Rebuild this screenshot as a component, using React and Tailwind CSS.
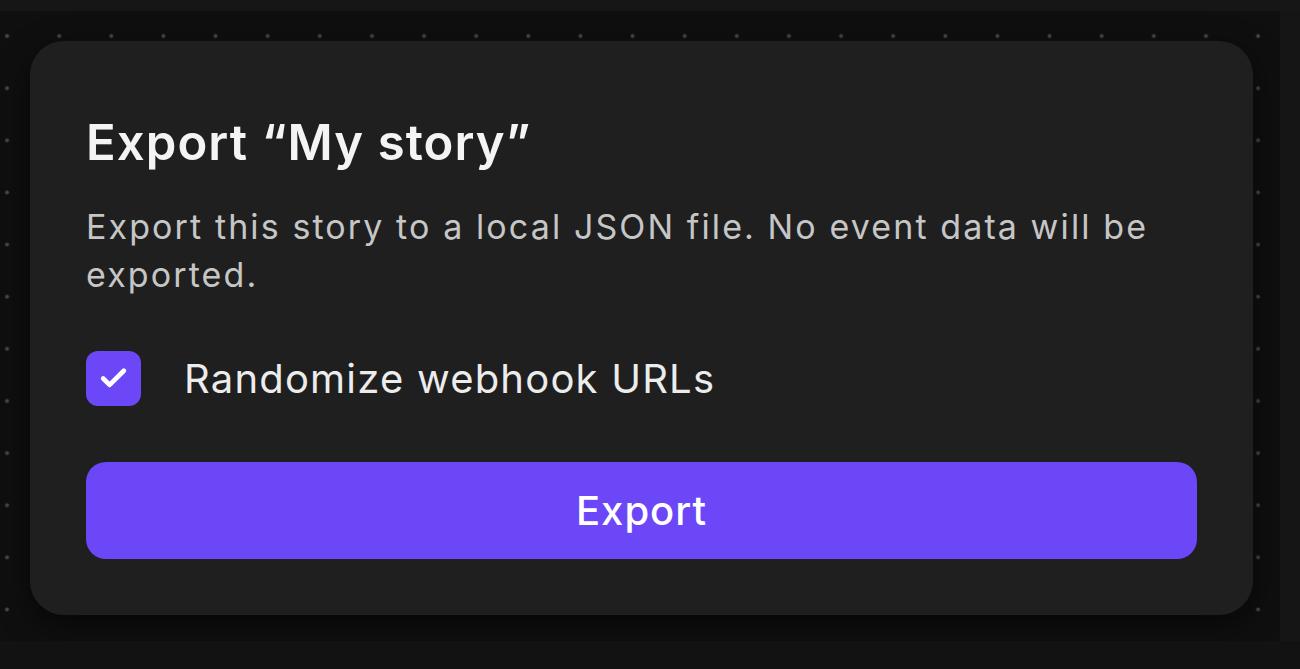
import { Check } from "lucide-react";

export default function App() {
  return (
    <div
      className="flex h-[669px] w-[1300px] flex-col overflow-hidden bg-[#161616] text-white"
      style={{ fontFamily: "Inter, 'Noto Sans', sans-serif" }}
    >
      <div className="h-[11px] shrink-0" />
      <div className="flex h-[630px] shrink-0">
        <div className="w-[1280px] bg-[#0f0f0f] bg-[radial-gradient(circle,#474747_1.7px,transparent_2.3px)] bg-[size:52.125px_52.125px] bg-[position:-19px_-1px] pl-[30px] pt-[30px]">
          <div className="flex w-[1223px] flex-col rounded-[34px] bg-[#1f1f1f] px-[56px] pb-[56px] pt-[74px] shadow-[0_10px_30px_rgba(0,0,0,0.55)]">
            <h1 className="text-[49px] font-semibold leading-[56px] tracking-[1.1px] text-[#f4f4f4]">
              Export “My story”
            </h1>
            <p className="mt-[32px] text-[34px] leading-[48px] tracking-[2.1px] text-[#c6c6c6]">
              Export this story to a local JSON file. No event data will be exported.
            </p>
            <label className="mt-[52px] flex items-center gap-[43px]">
              <span className="flex h-[55px] w-[55px] items-center justify-center rounded-[12px] bg-[#6b47f7]">
                <Check className="h-[31px] w-[31px] text-white" strokeWidth={3.6} />
              </span>
              <span className="text-[40px] leading-[48px] tracking-[1.2px] text-[#ececec]">
                Randomize webhook URLs
              </span>
            </label>
            <button className="mt-[56px] h-[97px] w-full rounded-[20px] bg-[#6b47f7] text-[40px] font-medium tracking-[1px] text-white">
              Export
            </button>
          </div>
        </div>
        <div className="flex-1 bg-[#151515]" />
      </div>
      <div className="flex-1 bg-[#121213]" />
    </div>
  );
}
